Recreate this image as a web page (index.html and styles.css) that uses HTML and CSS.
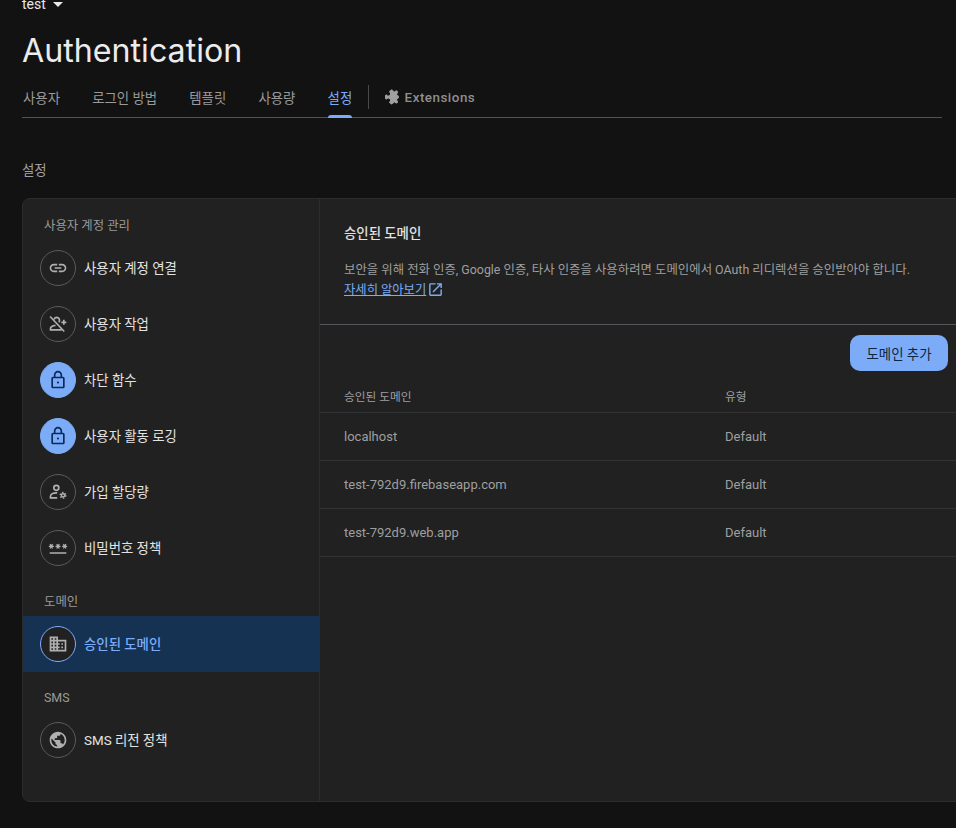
FILE: index.html
```html
<!DOCTYPE html>
<html lang="ko">
<head>
  <meta charset="UTF-8" />
  <meta name="viewport" content="width=device-width, initial-scale=1.0"/>
  <title>Authentication</title>
  <link rel="stylesheet" href="styles.css">
</head>
<body>
<header class="page-header">
  <div class="project">test <span class="caret"></span></div>
  <h1 class="page-title">Authentication</h1>
  <nav class="tabs">
    <a class="tab">사용자</a>
    <a class="tab">로그인 방법</a>
    <a class="tab">템플릿</a>
    <a class="tab">사용량</a>
    <a class="tab tab-active">설정</a>
    <span class="tab-sep"></span>
    <a class="tab tab-ext">
      <svg class="ext-icon" viewBox="0 0 24 24"><path transform="rotate(45 12 12)" d="M20.5 11H19V7c0-1.1-.9-2-2-2h-4V3.5C13 2.12 11.88 1 10.5 1S8 2.12 8 3.5V5H4c-1.1 0-1.99.9-1.99 2v3.8H3.5c1.49 0 2.7 1.21 2.7 2.7s-1.21 2.7-2.7 2.7H2V20c0 1.1.9 2 2 2h3.8v-1.5c0-1.49 1.21-2.7 2.7-2.7 1.49 0 2.7 1.21 2.7 2.7V22H17c1.1 0 2-.9 2-2v-4h1.5c1.38 0 2.5-1.12 2.5-2.5S21.88 11 20.5 11z"/></svg>
      Extensions
    </a>
  </nav>
</header>

<h2 class="section-label">설정</h2>

<main class="card">
  <aside class="sidebar">
    <div class="side-heading side-heading-first">사용자 계정 관리</div>
    <div class="side-item">
      <span class="circle"><svg viewBox="0 0 24 24"><path d="M3.9 12c0-1.71 1.39-3.1 3.1-3.1h4V7H7c-2.76 0-5 2.24-5 5s2.24 5 5 5h4v-1.9H7c-1.71 0-3.1-1.39-3.1-3.1zM8 13h8v-2H8v2zm9-6h-4v1.9h4c1.71 0 3.1 1.39 3.1 3.1s-1.39 3.1-3.1 3.1h-4V17h4c2.76 0 5-2.24 5-5s-2.24-5-5-5z"/></svg></span>
      <span class="side-label">사용자 계정 연결</span>
    </div>
    <div class="side-item">
      <span class="circle"><svg class="line-icon" viewBox="0 0 24 24"><path d="M7.2 6.5a3.4 3.4 0 0 1 3-2.5 3.6 3.6 0 0 1 3.6 3.6c0 .8-.3 1.6-.8 2.2"/><path d="M9 13.6c-3 .4-6 1.7-6 3.9V19h13.5"/><path d="M2.5 3 19.5 21"/><path d="M19 7v6M16 10h6"/></svg></span>
      <span class="side-label">사용자 작업</span>
    </div>
    <div class="side-item">
      <span class="circle circle-blue"><svg viewBox="0 0 24 24"><path d="M18 8h-1V6c0-2.76-2.24-5-5-5S7 3.24 7 6v2H6c-1.1 0-2 .9-2 2v10c0 1.1.9 2 2 2h12c1.1 0 2-.9 2-2V10c0-1.1-.9-2-2-2zM9 6c0-1.66 1.34-3 3-3s3 1.34 3 3v2H9V6zm9 14H6V10h12v10z"/><circle cx="12" cy="15" r="1.3"/></svg></span>
      <span class="side-label">차단 함수</span>
    </div>
    <div class="side-item">
      <span class="circle circle-blue"><svg viewBox="0 0 24 24"><path d="M18 8h-1V6c0-2.76-2.24-5-5-5S7 3.24 7 6v2H6c-1.1 0-2 .9-2 2v10c0 1.1.9 2 2 2h12c1.1 0 2-.9 2-2V10c0-1.1-.9-2-2-2zM9 6c0-1.66 1.34-3 3-3s3 1.34 3 3v2H9V6zm9 14H6V10h12v10z"/><circle cx="12" cy="15" r="1.3"/></svg></span>
      <span class="side-label">사용자 활동 로깅</span>
    </div>
    <div class="side-item">
      <span class="circle"><svg class="line-icon" viewBox="0 0 24 24"><circle cx="10" cy="7" r="3"/><path d="M11 13.1C7 12.8 3 14.3 3 17v2h8"/><circle class="gear-teeth" cx="18" cy="16" r="3.4"/><circle class="gear-ring" cx="18" cy="16" r="2"/></svg></span>
      <span class="side-label">가입 할당량</span>
    </div>
    <div class="side-item">
      <span class="circle"><svg viewBox="0 0 24 24"><path d="M2 17h20v2H2v-2zm1.15-4.05L4 11.47l.85 1.48 1.3-.75-.85-1.48H7v-1.5H5.3l.85-1.47L4.85 7 4 8.47 3.15 7l-1.3.75.85 1.47H1v1.5h1.7l-.85 1.48 1.3.75zm6.7-.75 1.3.75.85-1.48.85 1.48 1.3-.75-.85-1.48H15v-1.5h-1.7l.85-1.47-1.3-.75L12 8.47 11.15 7l-1.3.75.85 1.47H9v1.5h1.7l-.85 1.48zM23 9.22h-1.7l.85-1.47-1.3-.75L20 8.47 19.15 7l-1.3.75.85 1.47H17v1.5h1.7l-.85 1.48 1.3.75.85-1.48.85 1.48 1.3-.75-.85-1.48H23v-1.5z"/></svg></span>
      <span class="side-label">비밀번호 정책</span>
    </div>

    <div class="side-heading">도메인</div>
    <div class="side-item side-item-active">
      <span class="circle"><svg viewBox="0 0 24 24"><path d="M12 7V3H2v18h20V7H12zM6 19H4v-2h2v2zm0-4H4v-2h2v2zm0-4H4V9h2v2zm0-4H4V5h2v2zm4 12H8v-2h2v2zm0-4H8v-2h2v2zm0-4H8V9h2v2zm0-4H8V5h2v2zm10 12h-8v-2h2v-2h-2v-2h2v-2h-2V9h8v10zm-2-8h-2v2h2v-2zm0 4h-2v2h2v-2z"/></svg></span>
      <span class="side-label">승인된 도메인</span>
    </div>

    <div class="side-heading">SMS</div>
    <div class="side-item">
      <span class="circle"><svg viewBox="0 0 24 24"><path d="M12 2C6.48 2 2 6.48 2 12s4.48 10 10 10 10-4.48 10-10S17.52 2 12 2zm-1 17.93c-3.95-.49-7-3.85-7-7.93 0-.62.08-1.21.21-1.79L9 15v1c0 1.1.9 2 2 2v1.93zm6.9-2.54c-.26-.81-1-1.39-1.9-1.39h-1v-3c0-.55-.45-1-1-1H8v-2h2c.55 0 1-.45 1-1V7h2c1.1 0 2-.9 2-2v-.41c2.93 1.19 5 4.06 5 7.41 0 2.08-.8 3.97-2.1 5.39z"/></svg></span>
      <span class="side-label">SMS 리전 정책</span>
    </div>
  </aside>

  <section class="content">
    <div class="intro">
      <h3 class="intro-title">승인된 도메인</h3>
      <p class="intro-text">보안을 위해 전화 인증, Google 인증, 타사 인증을 사용하려면 도메인에서 OAuth 리디렉션을 승인받아야 합니다.</p>
      <p class="intro-link"><a class="learn-more">자세히 알아보기</a><svg class="open-icon" viewBox="0 0 24 24"><path d="M19 19H5V5h7V3H5c-1.11 0-2 .9-2 2v14c0 1.1.89 2 2 2h14c1.1 0 2-.9 2-2v-7h-2v7zM14 3v2h3.59l-9.83 9.83 1.41 1.41L19 6.41V10h2V3h-7z"/></svg></p>
    </div>
    <div class="toolbar">
      <button class="add-button">도메인 추가</button>
    </div>
    <table class="domains">
      <thead>
        <tr><th>승인된 도메인</th><th>유형</th></tr>
      </thead>
      <tbody>
        <tr><td>localhost</td><td>Default</td></tr>
        <tr><td>test-792d9.firebaseapp.com</td><td>Default</td></tr>
        <tr><td>test-792d9.web.app</td><td>Default</td></tr>
      </tbody>
    </table>
  </section>
</main>
</body>
</html>
```

FILE: styles.css
```css
html, body {
  overflow: hidden;
}
body {
  margin: 0;
  height: 828px;
  background-color: #121212;
  color: #e3e3e3;
  font-family: Roboto, "Noto Sans CJK KR", sans-serif;
  font-size: 13.4px;
}
.page-header {
  margin: -5px 14px 0 22px;
}
.project {
  height: 18px;
  line-height: 18px;
  font-size: 14px;
  color: #e8e8e8;
}
.caret {
  display: inline-block;
  width: 0;
  height: 0;
  margin-left: 4px;
  vertical-align: 2px;
  border-left: 5px solid transparent;
  border-right: 5px solid transparent;
  border-top: 5px solid #e8e8e8;
}
.page-title {
  margin: 18px 0 0;
  height: 40px;
  line-height: 40px;
  font-family: Inter, sans-serif;
  font-size: 32.2px;
  font-weight: 400;
  color: #ececec;
}
.tabs {
  display: flex;
  align-items: center;
  gap: 32.2px;
  height: 40px;
  margin-top: 6px;
  padding-left: 1px;
  border-bottom: 1px solid #50525a;
}
.tab {
  display: flex;
  align-items: center;
  height: 40px;
  color: #9a9a9a;
  position: relative;
}
.tab-active {
  color: #7cacf8;
}
.tab-active::after {
  content: "";
  position: absolute;
  left: 0;
  right: 0;
  bottom: -1px;
  height: 3px;
  border-radius: 3px 3px 0 0;
  background-color: #7cacf8;
}
.tab-sep {
  width: 1px;
  height: 24px;
  margin: 0 -17px 0 -16px;
  background-color: #4a4a4a;
}
.tab-ext {
  font-weight: 500;
  letter-spacing: 0.5px;
  color: #8f8f8f;
}
.ext-icon {
  width: 16px;
  height: 16px;
  margin-right: 4px;
  fill: #a0a0a0;
}
.section-label {
  margin: 43px 0 0 22px;
  height: 20px;
  line-height: 20px;
  font-size: 13.4px;
  font-weight: 400;
  color: #a0a0a0;
}
.card {
  display: flex;
  width: 950px;
  height: 604px;
  margin: 17px 0 0 22px;
  background-color: #212121;
  border: 1px solid #2c2c2c;
  border-radius: 8px;
  box-sizing: border-box;
  overflow: hidden;
}
.sidebar {
  width: 297px;
  flex-shrink: 0;
  border-right: 1px solid #2c2c2c;
  box-sizing: border-box;
}
.side-heading {
  height: 20px;
  line-height: 20px;
  margin: 16px 0 4px 21px;
  font-size: 12.4px;
  color: #9a9a9a;
}
.side-heading-first {
  margin-top: 17px;
  margin-bottom: 4px;
}
.side-item {
  display: flex;
  align-items: center;
  gap: 8px;
  height: 56px;
  padding-left: 17px;
  color: #e3e3e3;
}
.side-label {
  padding-bottom: 2px;
}
.circle {
  display: flex;
  align-items: center;
  justify-content: center;
  width: 36px;
  height: 36px;
  border: 1px solid #5a5c62;
  border-radius: 50%;
  box-sizing: border-box;
}
.circle svg {
  width: 20px;
  height: 20px;
  fill: #b0b0b0;
}
.circle svg.line-icon {
  fill: none;
  stroke: #b0b0b0;
  stroke-width: 2;
}
.gear-teeth {
  stroke-width: 1.6;
  stroke-dasharray: 1.8 1.8;
}
.gear-ring {
  stroke-width: 1.8;
}
.circle-blue {
  background-color: #7cacf8;
  border-color: #7cacf8;
}
.circle-blue svg {
  fill: #0b2a5c;
}
.side-item-active {
  background-color: #163253;
  color: #7cacf8;
  font-weight: 500;
}
.side-item-active .circle {
  background-color: #212121;
  border-color: #7cacf8;
}
.content {
  flex: 1;
}
.intro {
  height: 126px;
  padding: 25px 0 0 24px;
  border-bottom: 1px solid #55575c;
  box-sizing: border-box;
}
.intro-title {
  margin: 0;
  height: 20px;
  line-height: 20px;
  font-size: 13.4px;
  font-weight: 500;
  color: #e3e3e3;
}
.intro-text {
  margin: 16px 0 0;
  height: 20px;
  line-height: 20px;
  font-size: 12.4px;
  color: #9f9f9f;
}
.intro-link {
  display: flex;
  align-items: center;
  gap: 1px;
  margin: -1px 0 0;
  height: 20px;
  font-size: 12.3px;
}
.learn-more {
  color: #7cacf8;
  text-decoration: underline;
}
.open-icon {
  width: 17px;
  height: 17px;
  fill: #7cacf8;
}
.toolbar {
  display: flex;
  justify-content: flex-end;
  padding: 10px 8px 0 0;
  width: 636px;
  box-sizing: border-box;
}
.add-button {
  width: 98px;
  height: 36px;
  border: 0;
  border-radius: 10px;
  background-color: #7cacf8;
  color: #0f2440;
  font-family: inherit;
  font-size: 13.4px;
  font-weight: 400;
}
.domains {
  width: 100%;
  margin-top: 11px;
  border-collapse: collapse;
  font-size: 13px;
  text-align: left;
}
.domains th, .domains td {
  padding: 0 0 0 24px;
  border-bottom: 1px solid #333;
  font-weight: 400;
  color: #9f9f9f;
}
.domains th:first-child, .domains td:first-child {
  width: 381px;
  box-sizing: border-box;
}
.domains th {
  height: 27px;
  padding-bottom: 3px;
  font-size: 11.7px;
}
.domains td {
  height: 47px;
}
```
